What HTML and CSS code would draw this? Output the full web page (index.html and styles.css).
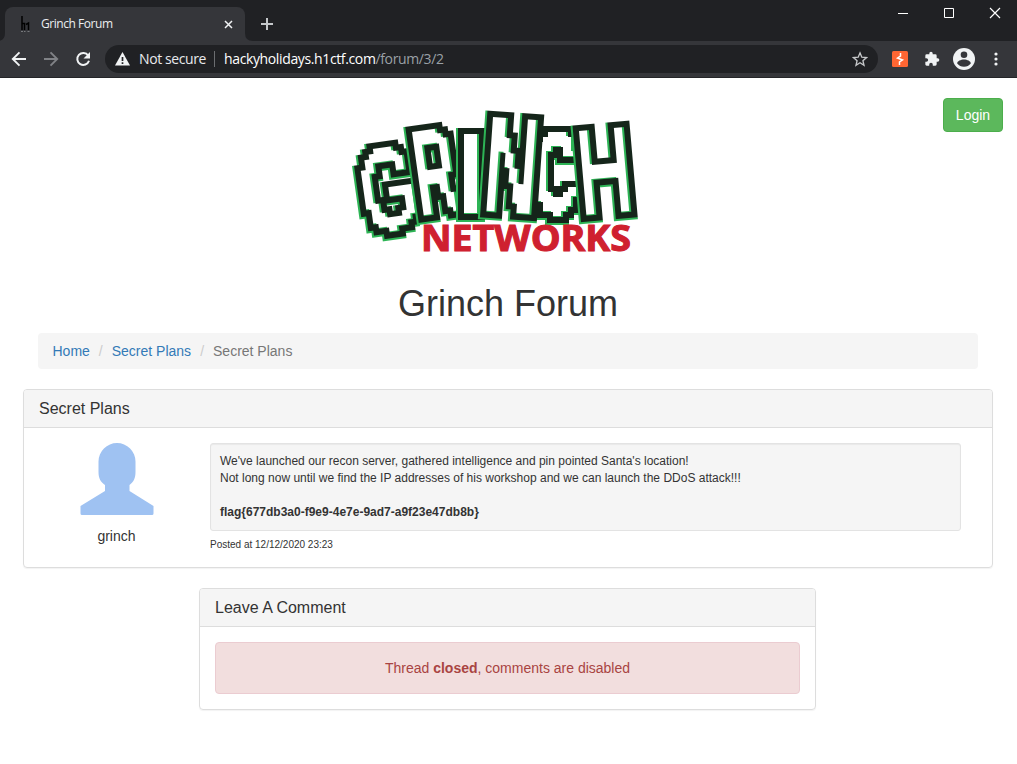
FILE: index.html
```
<!DOCTYPE html>
<html lang="en">
<head>
<meta charset="utf-8">
<title>Grinch Forum</title>
<link rel="stylesheet" href="styles.css">
</head>
<body>
<header class="browser">
  <div class="tabstrip">
    <div class="tab">
      <svg class="favicon" width="16" height="16" viewBox="0 0 16 16"><path d="M5 0v14M5 7.500h2.500v6.500M9 8.500l2.500-1.500v7" fill="none" stroke="#000" stroke-width="1.500"/><path d="M4 15.500h2M7 15.500h1.500M10.500 15.500h2" stroke="#77797c"/></svg>
      <span class="tab-title">Grinch Forum</span>
      <svg class="tab-close" width="9" height="9" viewBox="0 0 9 9"><path d="M1 1l7 7M8 1l-7 7" stroke="#f1f3f4" stroke-width="1.500"/></svg>
      <svg class="curve curve-left" width="8" height="8" viewBox="0 0 8 8"><path d="M8 0v8H0Q8 8 8 0z" fill="#35363a"/></svg>
      <svg class="curve curve-right" width="8" height="8" viewBox="0 0 8 8"><path d="M0 0v8H8Q0 8 0 0z" fill="#35363a"/></svg>
    </div>
    <svg class="new-tab" width="12" height="12" viewBox="0 0 12 12"><path d="M6 0v12M0 6h12" stroke="#c4c7ca" stroke-width="2"/></svg>
    <div class="window-buttons">
      <svg width="12" height="12" viewBox="0 0 12 12"><path d="M1 6.500h10" stroke="#fff"/></svg>
      <svg width="12" height="12" viewBox="0 0 12 12"><path d="M1.500 1.500h9v9h-9z" fill="none" stroke="#fff"/></svg>
      <svg width="12" height="12" viewBox="0 0 12 12"><path d="M1 1l10 10M11 1L1 11" stroke="#fff" stroke-width="1.200"/></svg>
    </div>
  </div>
  <div class="toolbar">
    <svg class="nav" width="16" height="16" viewBox="0 0 16 16"><path d="M15 8H2M8.500 1.300L1.800 8l6.700 6.700" fill="none" stroke="#f1f3f4" stroke-width="1.900"/></svg>
    <svg class="nav" width="16" height="16" viewBox="0 0 16 16"><path d="M1 8h13M7.500 1.300L14.200 8l-6.700 6.700" fill="none" stroke="#808286" stroke-width="1.900"/></svg>
    <svg class="nav" width="16" height="16" viewBox="0 0 16 16"><path d="M13.200 4.500A6 6 0 1 0 14 9.800" fill="none" stroke="#f1f3f4" stroke-width="2"/><path d="M15 1v6.500H8.500z" fill="#f1f3f4"/></svg>
    <div class="address">
      <svg width="15" height="14" viewBox="0 0 15 14"><path d="M7.500 0L15 13.500H0z" fill="#f1f3f4"/><path d="M7.500 5v4M7.500 10.200v1.800" stroke="#202124" stroke-width="1.700"/></svg>
      <span class="secure">Not secure</span>
      <span class="divider"></span>
      <span class="url">hackyholidays.h1ctf.com<span class="url-path">/forum/3/2</span></span>
      <svg class="star" width="16" height="16" viewBox="0 0 24 24"><path d="M12 2.800l2.700 6.500 7 .6-5.300 4.600 1.600 6.900-6-3.700-6 3.700 1.600-6.900L2.300 9.900l7-.6z" fill="none" stroke="#c6c8ca" stroke-width="2"/></svg>
    </div>
    <div class="extensions">
      <svg width="16" height="16" viewBox="0 0 16 16"><rect width="16" height="16" rx="1.500" fill="#ff6633"/><path d="M8.500 2v3L5.500 7l5 2-3 2v3" fill="none" stroke="#fff" stroke-width="1.500"/></svg>
      <svg width="16" height="16" viewBox="0 0 24 24"><path d="M20.500 11H19V7a2 2 0 0 0-2-2h-4V3.500a2.500 2.500 0 0 0-5 0V5H4a2 2 0 0 0-2 2v3.800h1.500a2.700 2.700 0 0 1 0 5.400H2V20c0 1.100.9 2 2 2h3.800v-1.500a2.700 2.700 0 0 1 5.400 0V22H17a2 2 0 0 0 2-2v-4h1.500a2.500 2.500 0 0 0 0-5z" fill="#f1f3f4"/></svg>
      <svg width="22" height="22" viewBox="0 0 22 22"><circle cx="11" cy="11" r="11" fill="#f1f3f4"/><circle cx="11" cy="6.700" r="3.300" fill="#35363a"/><path d="M4.200 15.400c0-2.300 3.600-3.900 6.800-3.900s6.800 1.600 6.800 3.900c-1.500 2-4 3.300-6.800 3.300s-5.300-1.300-6.800-3.300z" fill="#35363a"/></svg>
      <svg width="4" height="14" viewBox="0 0 4 14"><g fill="#f1f3f4"><circle cx="2" cy="2" r="1.600"/><circle cx="2" cy="7" r="1.600"/><circle cx="2" cy="12" r="1.600"/></g></svg>
    </div>
  </div>
</header>
<main class="page">
  <button class="login">Login</button>
  <svg class="logo" width="300" height="160" viewBox="345 100 300 160">
    <defs>
      <filter id="blocks" filterUnits="userSpaceOnUse" x="-15" y="-15" width="100" height="130" color-interpolation-filters="sRGB">
        <feFlood x="2" y="2" width="1" height="1" flood-color="#fff" result="f"/>
        <feOffset in="f" dx="0" dy="0" x="0" y="0" width="5" height="5"/>
        <feTile result="grid"/>
        <feComposite in="SourceGraphic" in2="grid" operator="in"/>
        <feMorphology operator="dilate" radius="2"/>
        <feComponentTransfer result="face"><feFuncA type="discrete" tableValues="0 1"/></feComponentTransfer>
        <feMorphology in="face" operator="dilate" radius="6" result="edge"/>
        <feFlood flood-color="#15251a"/>
        <feComposite in2="edge" operator="in" result="dark"/>
        <feMorphology in="face" operator="dilate" radius="7" result="wide"/>
        <feFlood flood-color="#2db455"/>
        <feComposite in2="wide" operator="in"/>
        <feOffset dx="-1" dy="1" result="green"/>
        <feFlood flood-color="#2db455"/>
        <feComposite in2="face" operator="in" result="rim"/>
        <feOffset in="face" dx="-2" dy="-1"/>
        <feComposite in2="face" operator="in" result="white"/>
        <feMerge><feMergeNode in="green"/><feMergeNode in="dark"/><feMergeNode in="rim"/><feMergeNode in="white"/></feMerge>
      </filter>
    </defs>
    <g class="letters">
      <g transform="translate(358 151) rotate(-8)"><g filter="url(#blocks)"><text transform="translate(-3 82) scale(.720 1.180)">G</text></g></g>
      <g transform="translate(412 132) rotate(-8)"><g filter="url(#blocks)"><text transform="translate(-4 85) scale(.600 1.230)">R</text></g></g>
      <g transform="translate(538 132)"><g filter="url(#blocks)"><text class="heavy" transform="translate(-3 80) scale(.580 1.140)">C</text></g></g>
      <g transform="translate(464 134)"><g filter="url(#blocks)"><text transform="translate(-5 80) scale(.98 1.150)">I</text></g></g>
      <g transform="translate(493 117) rotate(4)"><g filter="url(#blocks)"><text transform="translate(-5 94) scale(.74 1.350)">N</text></g></g>
      <g transform="translate(579 131) rotate(-5)"><g filter="url(#blocks)"><text transform="translate(-5 86) scale(.74 1.250)">H</text></g></g>
    </g>
    <text class="networks" x="421" y="251" textLength="210" lengthAdjust="spacingAndGlyphs">NETWORKS</text>
  </svg>
  <h1>Grinch Forum</h1>
  <nav class="breadcrumb"><a>Home</a><i>/</i><a>Secret Plans</a><i>/</i><span>Secret Plans</span></nav>
  <section class="panel">
    <h3>Secret Plans</h3>
    <div class="post">
      <div class="author">
        <svg width="74" height="73" viewBox="0 0 74 73"><path d="M18.500 18.500a18.500 18.500 0 0 1 37 0V29c0 6-2 10-6 13v6L73.500 63v7.500q0 1.500-1.500 1.500H2Q.5 72 .5 70.500V63L25 48v-6c-4.500-3-6.500-7-6.500-13z" fill="#9fc2f2"/></svg>
        <span>grinch</span>
      </div>
      <div class="message">
        <div class="well">We've launched our recon server, gathered intelligence and pin pointed Santa's location!<br>Not long now until we find the IP addresses of his workshop and we can launch the DDoS attack!!!<br><br><b>flag{677db3a0-f9e9-4e7e-9ad7-a9f23e47db8b}</b></div>
        <div class="posted">Posted at 12/12/2020 23:23</div>
      </div>
    </div>
  </section>
  <section class="panel comment">
    <h3>Leave A Comment</h3>
    <div class="alert">Thread <b>closed</b>, comments are disabled</div>
  </section>
</main>
</body>
</html>
```
FILE: styles.css
```
* { box-sizing: border-box; }
body { margin: 0; height: 764px; overflow: hidden; background: #fff; color: #333; font: 14px/20px "Liberation Sans", Arial, sans-serif; }
svg { display: block; flex: none; }
.browser { height: 78px; background: #35363a; border-bottom: 1px solid #242528; font-family: "Open Sans", "Noto Sans", sans-serif; }
.tabstrip { height: 41px; background: #202124; display: flex; align-items: flex-start; }
.tab { position: relative; width: 240px; height: 34px; margin: 7px 0 0 5px; padding: 0 12px; border-radius: 8px 8px 0 0; background: #35363a; display: flex; align-items: center; }
.tab-title { margin-left: 8px; color: #eceef0; font-size: 12px; letter-spacing: -.45px; font-weight: 500; flex: 1; }
.curve { position: absolute; bottom: 0; }
.curve-left { left: -8px; }
.curve-right { right: -8px; }
.new-tab { margin: 18px 0 0 16px; }
.window-buttons { margin: 7px 16px 0 auto; display: flex; gap: 34px; }
.toolbar { height: 36px; padding: 0 19px 0 11px; display: flex; align-items: center; }
.nav { margin-right: 16px; }
.address { width: 773px; height: 28px; margin-left: -2px; padding: 0 10px; border-radius: 14px; background: #202124; display: flex; align-items: center; font-size: 14px; color: #fff; white-space: nowrap; }
.secure { margin-left: 9px; width: 67px; letter-spacing: -.4px; color: #e8eaed; }
.divider { width: 1px; height: 16px; margin: 0 9px 0 8px; background: #6b6d70; }
.url { letter-spacing: -.37px; }
.url-path { color: #9aa0a6; }
.star { margin-left: auto; }
.extensions { margin-left: auto; display: flex; align-items: center; gap: 14px; }
.extensions svg:nth-child(2) { margin-left: 2px; }
.extensions svg:nth-child(3) { margin-left: -1px; }
.extensions svg:last-child { margin-left: 5px; }
.page { position: relative; padding: 22px 24px 0 23px; display: flex; flex-direction: column; align-items: stretch; }
.login { position: absolute; top: 20px; right: 14px; width: 60px; height: 34px; border: 1px solid #4cae4c; border-radius: 4px; background: #5cb85c; color: #fff; font: 14px/20px "Liberation Sans", Arial, sans-serif; padding: 0; }
.logo { margin-left: 322px; }
.letters { font: bold 100px "Liberation Sans", Arial, sans-serif; fill: #fff; }
.heavy { stroke: #fff; stroke-width: 4px; }
.networks { font: 700 36px "Open Sans", sans-serif; fill: #cf202f; stroke: #cf202f; stroke-width: 1.1px; }
h1 { margin: 24px 0 9px; font-size: 36px; line-height: 40px; font-weight: 400; text-align: center; }
.breadcrumb { margin: 0 15px 20px; height: 36px; padding: 8px 14.500px; border-radius: 4px; background: #f5f5f5; color: #777; }
.breadcrumb a { color: #337ab7; }
.breadcrumb i { margin: 0 9px; font-style: normal; color: #ccc; }
.panel { border: 1px solid #ddd; border-radius: 4px; box-shadow: 0 1px 1px rgba(0,0,0,.05); margin-bottom: 20px; }
.panel h3 { margin: 0; height: 38px; padding: 10px 15px; font-size: 16px; line-height: 17px; font-weight: 400; background: #f5f5f5; border-bottom: 1px solid #ddd; border-radius: 3px 3px 0 0; }
.post { display: flex; height: 139px; padding: 15px 31px 0 15px; }
.author { width: 155px; display: flex; flex-direction: column; align-items: center; gap: 10px; }
.message { flex: 1; margin-left: 16px; }
.well { height: 88px; padding: 9px; border: 1px solid #e3e3e3; border-radius: 3px; background: #f5f5f5; box-shadow: inset 0 1px 1px rgba(0,0,0,.05); font-size: 12px; line-height: 17px; }
.posted { margin-top: 7px; font-size: 10px; line-height: 14px; }
.comment { align-self: flex-start; width: 617px; height: 122px; margin-left: 176px; }
.alert { height: 52px; margin: 15px; padding: 15px; border: 1px solid #ebccd1; border-radius: 4px; background: #f2dede; color: #a94442; text-align: center; }
```
